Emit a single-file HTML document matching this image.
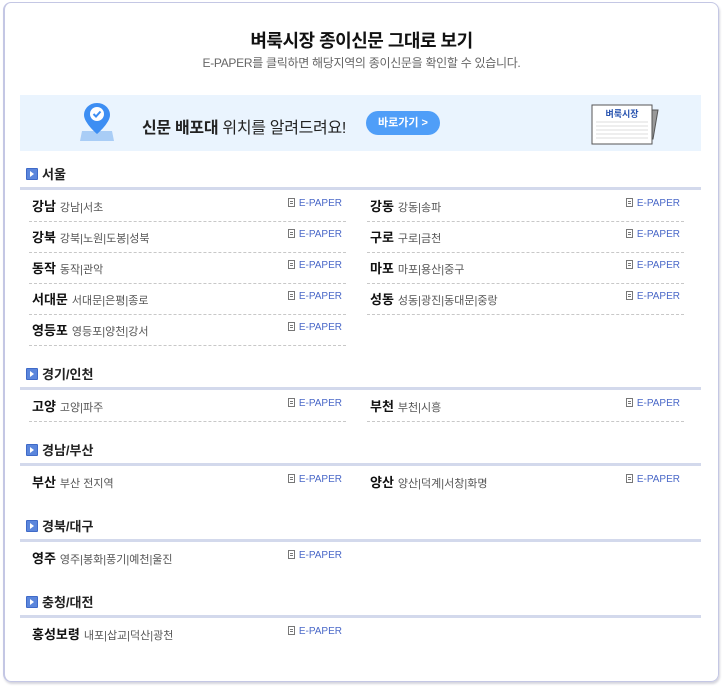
<!DOCTYPE html><html><head><meta charset="utf-8"><style>
body{margin:0;width:723px;height:686px;background:#fff;font-family:"Liberation Sans","Noto Sans CJK KR",sans-serif;position:relative;overflow:hidden}
.frame{position:absolute;left:3px;top:2px;width:713px;height:678px;border:1px solid #c4c7e4;border-left:2px solid #c4c7e4;border-radius:8px;box-shadow:1px 2px 2px #d5d5dd}
.t1{position:absolute;top:27px;left:0;width:723px;text-align:center;font-size:18px;font-weight:bold;color:#111;letter-spacing:-0.5px}
.t2{position:absolute;top:54px;left:0;width:723px;text-align:center;font-size:12px;color:#666;letter-spacing:-0.3px}
.banner{position:absolute;left:20px;top:95px;width:681px;height:56px;background:#eaf4fe}
.bt{position:absolute;left:142px;top:114px;font-size:16px;color:#222;letter-spacing:-0.3px}
.btn{position:absolute;left:366px;top:111px;width:74px;height:24px;border-radius:12px;background:#4f9ef8;color:#fff;font-size:11px;line-height:24px;text-align:center;font-weight:bold}
.sh{position:absolute;left:26px;font-size:13px;font-weight:bold;color:#222;height:14px;line-height:14px}
.sh i{display:inline-block;width:10px;height:10px;background:#5b86dc;border:1px solid #3f6ac8;border-radius:1px;vertical-align:-1px;margin-right:4px;position:relative}
.sh i:after{content:"";position:absolute;left:3px;top:2px;border-left:4px solid #fff;border-top:3px solid transparent;border-bottom:3px solid transparent}
.ln{position:absolute;left:20px;width:681px;height:3px;background:#d3d9ec}
.row{position:absolute;width:317px;height:30px;border-bottom:1px dashed #c8c8c8;line-height:32px;font-size:11px;color:#555}
.row b{font-size:13px;color:#111;margin:0 4px 0 3px}
.ep{position:absolute;right:4px;top:-3px;color:#4a68c8;font-size:10px}
.ep:before{content:"";display:inline-block;width:5px;height:7px;border:1px solid #777;margin-right:4px;vertical-align:-1px;background:linear-gradient(#777,#777) 1px 2px/3px 1px no-repeat,linear-gradient(#777,#777) 1px 4px/3px 1px no-repeat}
</style></head><body>
<div class="frame"></div>
<div class="t1">벼룩시장 종이신문 그대로 보기</div>
<div class="t2">E-PAPER를 클릭하면 해당지역의 종이신문을 확인할 수 있습니다.</div>
<div class="banner"></div>
<svg style="position:absolute;left:78px;top:100px" width="38" height="42" viewBox="0 0 38 42"><path d="M4 31 L34 31 L36 41 L2 41Z" fill="#a9cdf6"/><path d="M19 3 C11 3 6 9 6 15 C6 23 19 34 19 34 C19 34 32 23 32 15 C32 9 27 3 19 3Z" fill="#3d8ef3"/><circle cx="19" cy="14" r="7" fill="#fff"/><path d="M15.5 14 L18 16.5 L22.5 11.5" stroke="#3d8ef3" stroke-width="2" fill="none"/></svg>
<div class="bt"><b>신문 배포대</b> 위치를 알려드려요!</div>
<div class="btn">바로가기 &gt;</div>
<svg style="position:absolute;left:591px;top:104px" width="70" height="42"><path d="M60 6 L67 6 L62 35 L58 35Z" fill="#999" stroke="#555"/><rect x="1" y="1" width="60" height="39" fill="#fff" stroke="#555"/><text x="31" y="13" font-size="9" font-weight="bold" fill="#2a55b0" text-anchor="middle" font-family="Noto Sans CJK KR,sans-serif">벼룩시장</text><g stroke="#ddd"><line x1="5" y1="18" x2="57" y2="18"/><line x1="5" y1="22" x2="57" y2="22"/><line x1="5" y1="26" x2="57" y2="26"/><line x1="5" y1="30" x2="57" y2="30"/><line x1="5" y1="34" x2="57" y2="34"/></g></svg>

<div class="sh" style="top:168px"><i></i>서울</div><div class="ln" style="top:187px"></div>
<div class="row" style="left:29px;top:191px"><b>강남</b>강남|서초<span class="ep">E-PAPER</span></div>
<div class="row" style="left:367px;top:191px"><b>강동</b>강동|송파<span class="ep">E-PAPER</span></div>
<div class="row" style="left:29px;top:222px"><b>강북</b>강북|노원|도봉|성북<span class="ep">E-PAPER</span></div>
<div class="row" style="left:367px;top:222px"><b>구로</b>구로|금천<span class="ep">E-PAPER</span></div>
<div class="row" style="left:29px;top:253px"><b>동작</b>동작|관악<span class="ep">E-PAPER</span></div>
<div class="row" style="left:367px;top:253px"><b>마포</b>마포|용산|중구<span class="ep">E-PAPER</span></div>
<div class="row" style="left:29px;top:284px"><b>서대문</b>서대문|은평|종로<span class="ep">E-PAPER</span></div>
<div class="row" style="left:367px;top:284px"><b>성동</b>성동|광진|동대문|중랑<span class="ep">E-PAPER</span></div>
<div class="row" style="left:29px;top:315px"><b>영등포</b>영등포|양천|강서<span class="ep">E-PAPER</span></div>

<div class="sh" style="top:368px"><i></i>경기/인천</div><div class="ln" style="top:387px"></div>
<div class="row" style="left:29px;top:391px"><b>고양</b>고양|파주<span class="ep">E-PAPER</span></div>
<div class="row" style="left:367px;top:391px"><b>부천</b>부천|시흥<span class="ep">E-PAPER</span></div>

<div class="sh" style="top:444px"><i></i>경남/부산</div><div class="ln" style="top:463px"></div>
<div class="row" style="left:29px;top:467px;border:0"><b>부산</b>부산 전지역<span class="ep">E-PAPER</span></div>
<div class="row" style="left:367px;top:467px;border:0"><b>양산</b>양산|덕계|서창|화명<span class="ep">E-PAPER</span></div>

<div class="sh" style="top:520px"><i></i>경북/대구</div><div class="ln" style="top:539px"></div>
<div class="row" style="left:29px;top:543px;border:0"><b>영주</b>영주|봉화|풍기|예천|울진<span class="ep">E-PAPER</span></div>

<div class="sh" style="top:596px"><i></i>충청/대전</div><div class="ln" style="top:615px"></div>
<div class="row" style="left:29px;top:619px;border:0"><b>홍성보령</b>내포|삽교|덕산|광천<span class="ep">E-PAPER</span></div>
</body></html>
